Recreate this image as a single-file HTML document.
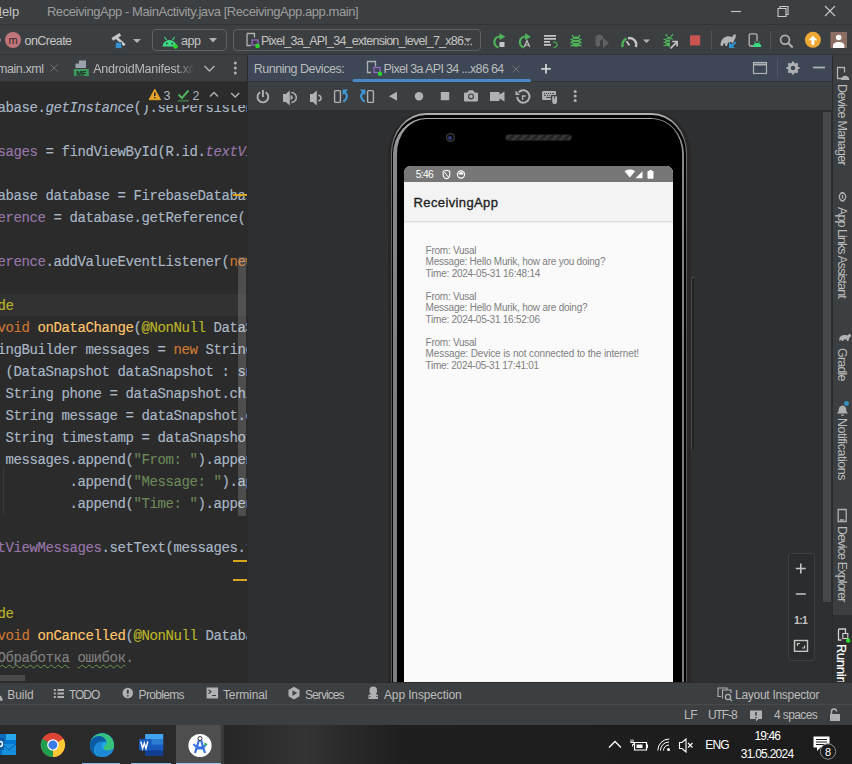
<!DOCTYPE html>
<html><head><meta charset="utf-8">
<style>
*{margin:0;padding:0;box-sizing:border-box}
html,body{width:852px;height:764px;overflow:hidden;background:#3c3f41}
body{position:relative;font-family:"Liberation Sans",sans-serif;color:#bbbbbb}
.a{position:absolute}
.t{position:absolute;white-space:nowrap;font-size:12.5px;line-height:14px}
/* code */
#ed{position:absolute;left:0;top:82px;width:247px;height:601px;background:#2b2b2b;overflow:hidden}
.cl{position:absolute;left:-154.6px;height:22px;line-height:22px;white-space:pre;font-family:"Liberation Mono",monospace;font-size:14px;letter-spacing:-0.4px;color:#a9b7c6;-webkit-text-stroke:0.15px currentColor}
.pu{color:#9876aa}.it{font-style:italic}.kw{color:#cc7832}.an{color:#bbb529}.mt{color:#ffc66d}.st{color:#6a8759}.cm{color:#808080}
.wv{text-decoration:underline wavy #689a50;text-decoration-thickness:1px;text-underline-offset:1.8px;text-decoration-skip-ink:none}
svg{position:absolute;overflow:visible}
.vt{position:absolute;white-space:nowrap;font-size:12.5px;line-height:14px;color:#bbbbbb;transform-origin:0 0;transform:rotate(90deg)}
</style></head><body>

<!-- title bar -->
<div class="a" style="left:0;top:0;width:852px;height:25px;background:#3c3f41"></div>
<div class="a" style="left:0;top:24px;width:852px;height:1px;background:#323537"></div>

<!-- window controls -->
<svg width="852" height="25" style="left:0;top:0">
<path d="M731 11.5h10" stroke="#c8c8c8" stroke-width="1.1"/>
<path d="M778 8.5h8v8h-8z M780 8.5v-2h8v8h-2" stroke="#c8c8c8" stroke-width="1.1" fill="none"/>
<path d="M825 6l10 10M835 6l-10 10" stroke="#c8c8c8" stroke-width="1.1"/>
</svg>

<!-- toolbar -->
<div class="a" style="left:0;top:54px;width:852px;height:1px;background:#323537"></div>
<svg width="852" height="30" style="left:0;top:25px">
<circle cx="-1" cy="15" r="2" fill="#8c8c8c"/>
<circle cx="13" cy="15" r="8" fill="#c0757a"/>
<text x="13" y="19" font-family="Liberation Sans" font-size="11" fill="#3a2526" text-anchor="middle">m</text>
<!-- hammer -->
<path d="M112.3 14.3l8-5" stroke="#c8c8c8" stroke-width="3.2"/>
<path d="M116.5 12.8l8.2 7.5" stroke="#c8c8c8" stroke-width="2.8"/>
<rect x="115.3" y="17.2" width="6.6" height="6.4" fill="#3a3d3f"/>
<rect x="115.8" y="17.7" width="5.6" height="5.4" fill="#3592d0"/>
<path d="M133 14h8l-4 4z" fill="#afb1b3"/>
<!-- app combo -->
<rect x="152.5" y="4.5" width="74" height="21" rx="3.5" fill="none" stroke="#5e6163"/>
<path d="M162.5 21.5a7 6.5 0 0 1 14 0z" fill="#3ddc84"/>
<path d="M164.5 12l2 3M174.5 12l-2 3" stroke="#3ddc84" stroke-width="1.2"/>
<circle cx="166.8" cy="18.5" r="0.9" fill="#3c3f41"/><circle cx="172.2" cy="18.5" r="0.9" fill="#3c3f41"/>
<circle cx="175.5" cy="21.5" r="2.3" fill="#2cd62c"/>
<path d="M209 13h8l-4 4.5z" fill="#afb1b3"/>
<!-- device combo -->
<rect x="233.5" y="4.5" width="247" height="21" rx="3.5" fill="none" stroke="#5e6163"/>
<path d="M247 8.5h7.5v4M251 20.5h-4v-12" fill="none" stroke="#afb1b3" stroke-width="1.3"/>
<rect x="252" y="15" width="6" height="5" fill="none" stroke="#9a6bd0" stroke-width="1.2"/>
<circle cx="257.5" cy="21" r="2.3" fill="#2cd62c"/>
<path d="M464 13.3h7.6l-3.8 3.9z" fill="#a0a2a4"/>
<path d="M464.6 19.5h1.3M467.6 19.5h1.3M470.6 19.5h1.3" stroke="#c4c4c4" stroke-width="1.3"/>
<!-- rerun -->
<path d="M498.5 22.5a5.6 5.6 0 0 1 1.5-11" fill="none" stroke="#4fb15a" stroke-width="2.2"/>
<path d="M499.5 8.3l6 3.4-6 3.4z" fill="#4fb15a"/>
<rect x="499.5" y="17" width="5" height="5" fill="#c4c4c4"/>
<!-- apply changes -->
<path d="M524 22.5a5.6 5.6 0 0 1 1.5-11" fill="none" stroke="#4fb15a" stroke-width="2.2"/>
<path d="M525 8.3l6 3.4-6 3.4z" fill="#4fb15a"/>
<path d="M524.3 22l2.7-6.5 2.7 6.5M525.3 20h3.4" fill="none" stroke="#c4c4c4" stroke-width="1.2"/>
<!-- apply code changes -->
<path d="M544 10.8h12M544 13.9h12M544 16.9h6M544 19.9h7" stroke="#c4c4c4" stroke-width="1.8"/>
<path d="M553 17.5a2.6 2.6 0 1 1 0.5 4.5" fill="none" stroke="#4fb15a" stroke-width="1.2"/>
<!-- debug -->
<ellipse cx="576" cy="16.5" rx="4.2" ry="5.2" fill="#4fb15a"/>
<path d="M572 10l2 2.5M580 10l-2 2.5M570.5 14.5h11M570.5 17.5h11M570.5 20.5h11" stroke="#4fb15a" stroke-width="1.3"/>
<path d="M573 14.5h6M573 17.5h6" stroke="#3c3f41" stroke-width="0.9"/>
<!-- attach debugger -->
<path d="M595.5 11.5l3.5-2 4 1.5v3l-3 2v4.5l-2 1.5-2.5-2z" fill="#5f6163"/>
<path d="M603 13v10l6-5z" fill="#5f6163"/>
<!-- profiler -->
<path d="M622.8 22a6.6 6.6 0 0 1 3.6-8.3" fill="none" stroke="#4fb15a" stroke-width="2.4"/>
<path d="M628 13.3a6.6 6.6 0 0 1 7.8 8.7" fill="none" stroke="#c4c4c4" stroke-width="2.4"/>
<path d="M626.5 16.3l3 4.2" stroke="#c4c4c4" stroke-width="1.8"/>
<path d="M643 14.5h7l-3.5 3.5z" fill="#afb1b3"/>
<!-- bug arrow -->
<ellipse cx="669.3" cy="16.8" rx="4" ry="5" fill="#4fb15a"/>
<path d="M665.5 9.2l2 2.3M673 9.2l-2 2.3M663.5 14.3h3M663.5 17.3h3M663.5 20.3h3" stroke="#4fb15a" stroke-width="1.3"/>
<path d="M666 14.3h6.5M666 17.3h6.5" stroke="#3c3f41" stroke-width="0.8"/>
<path d="M670 21.5h8v-6.5h-8z" fill="#3c3f41"/>
<path d="M670.5 23.5l6.3-6.3M672.3 16.5h4.8v4.8" fill="none" stroke="#c4c4c4" stroke-width="1.7"/>
<!-- stop -->
<rect x="690" y="10.3" width="10.2" height="10.2" fill="#c75450"/>
<path d="M711.5 6v19" stroke="#515456" stroke-width="1"/>
<!-- gradle sync -->
<path d="M720.5 20.5c0-5 2.5-8 6-9 2-0.5 4 0 5.5 0.5 1-1 1.5-2.8 2.8-2.8 1.3 0 1.3 2.5 0.2 4.5-0.8 1.5-1.5 3-2.2 4.5l-2.2-1.5c-0.5 0.5-1.5 0.8-2.6 0.8l-1 3.5h-1.8v-2.5h-1.5l-1 2.5z" fill="#b4b4b4"/>
<path d="M735.7 17.2l-4.8 4.2" stroke="#3592d0" stroke-width="2"/>
<path d="M729 16.7v6.2h5.8z" fill="#3592d0"/>
<!-- device manager -->
<path d="M753 21h-2.5a1.3 1.3 0 0 1-1.3-1.3v-9.5a1.3 1.3 0 0 1 1.3-1.3h5.2a1.3 1.3 0 0 1 1.3 1.3v6" fill="none" stroke="#b4b4b4" stroke-width="1.3"/>
<path d="M753 22a4.1 4.1 0 0 1 8.2 0z" fill="#3ddc84"/>
<path d="M754.5 16.5l1 1.5M759.7 16.5l-1 1.5" stroke="#3ddc84" stroke-width="0.9"/>
<path d="M770.5 6v19" stroke="#515456" stroke-width="1"/>
<!-- search -->
<circle cx="785" cy="14.8" r="4.4" fill="none" stroke="#afb1b3" stroke-width="1.7"/>
<path d="M788.2 18l4.5 4.5" stroke="#afb1b3" stroke-width="1.9"/>
<!-- update -->
<circle cx="812.9" cy="14.8" r="8" fill="#eea935"/>
<path d="M808.6 15.2l4.3-4.5 4.3 4.5h-2.9v4.6h-2.8v-4.6z" fill="#fff"/>
<!-- avatar -->
<rect x="830.5" y="7" width="16.5" height="16" fill="#8d6e63"/>
<circle cx="838.7" cy="12.5" r="2.8" fill="#fff"/>
<path d="M833 23v-2.5c0-2 2.5-3.5 5.7-3.5s5.7 1.5 5.7 3.5v2.5z" fill="#fff"/>
</svg>

<!-- tab row -->
<div class="a" style="left:0;top:55px;width:247px;height:26px;background:#3c3f41"></div>
<div class="a" style="left:0;top:81px;width:833px;height:1px;background:#323232"></div>
<div class="a" style="left:247px;top:55px;width:1px;height:628px;background:#2b2b2b"></div>
<div class="a" style="left:248px;top:55px;width:584px;height:26px;background:#3d4756"></div>
<div class="a" style="left:832px;top:55px;width:1px;height:628px;background:#2b2b2b"></div>
<div class="t" id="manif" style="left:93.2px;top:62.3px;font-size:12.5px;letter-spacing:-0.26px;width:100.5px;overflow:hidden;-webkit-mask-image:linear-gradient(90deg,#000 83%,rgba(0,0,0,0.05))">AndroidManifest.xml</div>
<svg width="852" height="28" style="left:0;top:55px">
<path d="M50.5 9.5l7 7M57.5 9.5l-7 7" stroke="#6e6e6e" stroke-width="1"/>
<path d="M79 5.5h7v7.5h-10.5v-4z" fill="#9aa2ab"/>
<path d="M75.5 8.5h3.5v-3.2z" fill="#3c3f41"/>
<rect x="73.8" y="14" width="15" height="7" fill="#3a9a5b"/>
<text x="81.3" y="20.6" font-family="Liberation Sans" font-weight="bold" font-size="7" fill="#1e2a22" text-anchor="middle">MF</text>
<path d="M204.5 11l5 5 5-5" fill="none" stroke="#afb1b3" stroke-width="1.5"/>
<circle cx="235.3" cy="8" r="1.5" fill="#afb1b3"/><circle cx="235.3" cy="13" r="1.5" fill="#afb1b3"/><circle cx="235.3" cy="18" r="1.5" fill="#afb1b3"/>
<!-- running devices header icons -->
<path d="M371 17.5h-3.5v-11h8v5" fill="none" stroke="#afb1b3" stroke-width="1.3"/>
<rect x="374" y="12.5" width="6" height="5" fill="none" stroke="#9a6bd0" stroke-width="1.2"/>
<circle cx="380" cy="18.8" r="2.2" fill="#2cd62c"/>
<path d="M512.5 10.5l7 7M519.5 10.5l-7 7" stroke="#6e6e6e" stroke-width="1"/>
<rect x="352.5" y="24" width="178.5" height="3" rx="1.5" fill="#4a88c7"/>
<path d="M546 9v9.5M541.2 13.8h9.6" stroke="#d0d0d0" stroke-width="1.8"/>
<rect x="753.5" y="7.5" width="13" height="11" fill="none" stroke="#afb1b3" stroke-width="1.2"/>
<path d="M753.5 9.5h13" stroke="#afb1b3" stroke-width="2"/>
<path d="M777.5 4v18" stroke="#4e5968" stroke-width="1"/>
<circle cx="793" cy="13" r="3.8" fill="none" stroke="#afb1b3" stroke-width="3"/>
<path d="M793 6.5v2.5M793 17v2.5M786.5 13h2.5M797 13h2.5M788.4 8.4l1.8 1.8M795.8 15.8l1.8 1.8M788.4 17.6l1.8-1.8M795.8 10.2l1.8-1.8" stroke="#afb1b3" stroke-width="2.2"/>
<path d="M813 12.5h12" stroke="#afb1b3" stroke-width="1.8"/>
</svg>

<!-- running devices toolbar -->
<div class="a" style="left:248px;top:82px;width:584px;height:28px;background:#3c3f41"></div>
<div class="a" style="left:248px;top:110px;width:584px;height:573px;background:#2e2f31"></div>
<svg width="852" height="28" style="left:0;top:82px">
<g fill="#afb1b3" stroke="#afb1b3">
<path d="M260.2 10.3a5.4 5.4 0 1 0 5.4 0" fill="none" stroke-width="1.9"/>
<path d="M262.9 8v7" stroke-width="1.9"/>
<path d="M283 12h2.8l4-3.6v15.2l-4-3.6h-2.8z" stroke="none"/>
<path d="M291.3 10.5a5 5 0 0 1 0 10" fill="none" stroke-width="1.5"/>
<path d="M290.5 13.2a2.2 2.2 0 0 1 0 4.6z" stroke="none"/>
<path d="M310 12h2.8l4-3.6v15.2l-4-3.6h-2.8z" stroke="none"/>
<path d="M318.3 13.3a2.6 2.6 0 0 1 0 5.4" fill="none" stroke-width="1.6"/>
<rect x="334.6" y="8.6" width="5.8" height="11.8" rx="1" fill="none" stroke-width="1.4"/>
<rect x="367.6" y="8.6" width="5.8" height="11.8" rx="1" fill="none" stroke-width="1.4"/>
<path d="M389 14.3l8-4.5v9z" stroke="none"/>
<circle cx="419" cy="14.2" r="4.2" stroke="none"/>
<rect x="440.8" y="10" width="8.4" height="8.2" stroke="none"/>
<path d="M465.2 10.5h2.2l1.5-2.2h4.2l1.5 2.2h2.2a1.2 1.2 0 0 1 1.2 1.2v6.6a1.2 1.2 0 0 1-1.2 1.2h-11.6a1.2 1.2 0 0 1-1.2-1.2v-6.6a1.2 1.2 0 0 1 1.2-1.2z" stroke="none"/>
<path d="M490 10h9.5v9h-9.5zM499.5 12.5l5-3v10l-5-3z" stroke="none"/>
<path d="M518.7 10.3a6.2 6.2 0 1 1 -1.6 4.6" fill="none" stroke-width="2"/>
<path d="M515.5 8.5v4.5h4.5z" stroke="none"/>
<path d="M522.6 18v-4h3.2" fill="none" stroke-width="1.4"/>
<rect x="542.1" y="8.9" width="13.9" height="9" rx="1" stroke="none"/>
<circle cx="575.2" cy="9.6" r="1.5" stroke="none"/><circle cx="575.2" cy="14.1" r="1.5" stroke="none"/><circle cx="575.2" cy="18.5" r="1.5" stroke="none"/>
</g>
<circle cx="471" cy="14.4" r="3" fill="#3c3f41"/><circle cx="471" cy="14.4" r="1.8" fill="#afb1b3"/>
<g fill="#3c3f41">
<rect x="544" y="11" width="1" height="1"/><rect x="546" y="11" width="1" height="1"/><rect x="547.9" y="11" width="1" height="1"/><rect x="549.9" y="11" width="1" height="1"/><rect x="552.2" y="11" width="1.8" height="1"/>
<rect x="544" y="12.9" width="1.7" height="1"/><rect x="547.1" y="12.9" width="1" height="1"/><rect x="548.9" y="12.9" width="1" height="1"/>
<rect x="546.2" y="14.9" width="4.8" height="1"/>
<rect x="551" y="13" width="7" height="9"/>
</g>
<path d="M552.2 14.2h4.9v5.6a2.45 2.45 0 0 1-4.9 0z" fill="#afb1b3"/>
<path d="M554.65 14.2v2.5" stroke="#3c3f41" stroke-width="0.9"/>
<path d="M344.3 10.2Q350 14.5 343.3 19.8" fill="none" stroke="#3d9ad6" stroke-width="2.1"/>
<path d="M342.6 7.6h5.7l-5.7 5.7z" fill="#3d9ad6"/>
<path d="M363.7 10.2Q358 14.5 364.7 19.8" fill="none" stroke="#3d9ad6" stroke-width="2.1"/>
<path d="M365.4 7.6h-5.7l5.7 5.7z" fill="#3d9ad6"/>
</svg>

<!-- phone -->
<div class="a" style="left:248px;top:110px;width:584px;height:572px;overflow:hidden">
 <div class="a" style="left:443.2px;top:167.3px;width:2.4px;height:173px;background:#232323;border-left:1px solid #4a4a4a;border-top:1px solid #555;border-radius:1px"></div>
  <div class="a" style="left:139.6px;top:2px;width:303.4px;height:700px;border-radius:37px/42px;background:#292727"></div>
 <div class="a" style="left:142.8px;top:3px;width:296.5px;height:700px;border-radius:35.5px/40.5px;background:linear-gradient(180deg,#b0b0b0 0px,#707070 30px,#555 200px)"></div>
 <div class="a" style="left:144px;top:4.6px;width:293.7px;height:700px;border-radius:34px/39px;background:#000"></div>
 <div class="a" style="left:144.7px;top:7.9px;width:291.4px;height:700px;border-radius:33px/36.5px;background:linear-gradient(180deg,#a8aaad 0px,#85878b 40px,#7a7c80 300px)"></div>
 <div class="a" style="left:149px;top:9.4px;width:284.5px;height:700px;border-radius:29px/34.5px;background:#000"></div>
 <!-- camera & speaker -->
 <div class="a" style="left:197.6px;top:22.8px;width:9.4px;height:9.4px;border-radius:50%;background:#0a0a0e;box-shadow:inset 0 0 0 1.2px #3a3a3e"></div>
 <div class="a" style="left:200.3px;top:25.5px;width:4px;height:4px;border-radius:50%;background:#2c3a78"></div>
 <div class="a" style="left:258px;top:24.6px;width:65.2px;height:5.7px;border-radius:3px;background:repeating-linear-gradient(135deg,#1e1e1e 0,#3c3c3c 2.8px,#1e1e1e 5.6px);box-shadow:0 0 0 0.6px #333"></div>
 <!-- screen -->
 <div class="a" style="left:156px;top:56px;width:268.5px;height:520px;border-radius:6.5px 6.5px 0 0;background:#fafafa;overflow:hidden">
  <div class="a" style="left:0;top:0;width:269px;height:16px;background:#777777"></div>
  <div class="a" style="left:0;top:16px;width:269px;height:39px;background:#f3f3f3;box-shadow:0 1px 1.5px rgba(0,0,0,0.16)"></div>
  <svg width="269" height="16" style="left:0;top:0">
   <path d="M39.2 5.2l3.3-1 3.3 1v3.2c0 2.3-1.5 3.8-3.3 4.4-1.8-0.6-3.3-2.1-3.3-4.4z" fill="none" stroke="#fff" stroke-width="1.1"/>
   <path d="M40.5 6l3.8 5" stroke="#fff" stroke-width="1"/>
   <circle cx="57" cy="8.5" r="3.6" fill="none" stroke="#fff" stroke-width="1.1"/>
   <path d="M54.6 7.6a2.6 2.6 0 0 1 4.8 0v1h-4.8z" fill="#fff"/>
   <path d="M220.5 5.2c3-2.4 7.6-2.4 10.6 0l-5.3 6.4z" fill="#fff"/>
   <path d="M231.5 12.2l7-7v7z" fill="#fff"/>
   <rect x="243.5" y="5" width="6" height="7.8" rx="0.8" fill="#fff"/>
   <rect x="245.3" y="4" width="2.4" height="1.2" fill="#fff"/>
  </svg>
 </div>
</div>

<!-- right strip -->
<div class="a" style="left:833px;top:55px;width:19px;height:628px;background:#3c3f41"></div>
<div class="a" style="left:833px;top:614.5px;width:19px;height:68px;background:#2d2f31"></div>
<div class="a" style="left:823px;top:112px;width:8px;height:490px;background:#46484a"></div>
<svg width="19" height="628" style="left:833px;top:55px">
<g fill="none" stroke="#afb1b3" stroke-width="1.3">
<path d="M10 23.5h-5.5v-11h7v5"/>
<path d="M7.5 138a4 4 0 1 1 0 7.6M11.5 138a4 4 0 1 0 0 7.6"/>
<path d="M9.5 140v3.6"/>
<path d="M5.2 466.5v-12h8v12zM7 464.8h4"/>
</g>
<path d="M8 25a4.2 4.2 0 0 1 8.4 0z" fill="#afb1b3"/>
<path d="M6.5 286c-1-3 1-6 5-6 2 0 3 1 3.5 0 1-1.5 3-1 3 0.5s-1.5 2-2 3l-0.5 2.5h-1.5v-1.5h-3l-1 1.5h-1.5v-1.5c-0.5 0-1 1-2 1.5z" fill="#afb1b3"/>
<path d="M5.5 356.5c0-4 1.5-6 4-6s4 2 4 6l1.5 2h-11z M8 359.5a1.5 1.5 0 0 0 3 0" fill="#afb1b3"/>
<circle cx="13.5" cy="348.5" r="2.4" fill="#3592c4"/>
<path d="M5.5 574h7v4M8.5 585h-3v-11" fill="none" stroke="#d0d0d0" stroke-width="1.3"/>
<rect x="9.8" y="578.5" width="5" height="5" fill="none" stroke="#d0d0d0" stroke-width="1.1"/>
<circle cx="15.2" cy="585.5" r="2.2" fill="#2cd62c"/>
</svg>
<div class="a" style="left:833px;top:55px;width:19px;height:627px;overflow:hidden">
<div class="vt" style="left:15.1px;top:589px;letter-spacing:0px;color:#ffffff;-webkit-text-stroke:0.2px #fff">Running Devices</div>
</div>
<!-- zoom controls -->
<div class="a" style="left:787.5px;top:553px;width:27px;height:107.5px;border:1px solid #3e4042;border-radius:3px;background:#2b2c2d"></div>
<svg width="40" height="110" style="left:780px;top:550px">
<path d="M20.8 13.5v10M15.8 18.5h10M15.8 44h10" stroke="#c4c4c4" stroke-width="1.6"/>
<text x="20.6" y="73.5" font-family="Liberation Sans" font-weight="bold" font-size="10.5" fill="#c4c4c4" text-anchor="middle" letter-spacing="-0.6">1:1</text>
<rect x="14.5" y="90.5" width="13" height="10.8" fill="none" stroke="#c4c4c4" stroke-width="1.4"/>
<path d="M17.5 96v-2.5h2.5M24.5 95.5v2.5h-2.5" fill="none" stroke="#c4c4c4" stroke-width="1.2"/>
</svg>

<!-- editor -->
<div id="ed">
<div class="a" style="left:0;top:212px;width:247px;height:22px;background:#323232"></div>
<div class="cl" style="top:15px">        FirebaseDatabase.<span class="it">getInstance</span>().setPersistenceEnabled(true);</div>
<div class="cl" style="top:59px"><span class="pu">        textViewMessages</span> = findViewById(R.id.<span class="pu it">textViewMessages</span>);</div>
<div class="cl" style="top:103px">        FirebaseDatabase database = FirebaseDatabase.<span class="it">getInstance</span>();</div>
<div class="cl" style="top:125px"><span class="pu">        databaseReference</span> = database.getReference(<span class="st">&quot;messages&quot;</span>);</div>
<div class="cl" style="top:169px"><span class="pu">        databaseReference</span>.addValueEventListener(<span class="kw">new</span> ValueEventListener() {</div>
<div class="cl" style="top:213px"><span class="an">            @Override</span></div>
<div class="cl" style="top:235px"><span class="kw">            public</span> <span class="kw">void</span> <span class="mt">onDataChange</span>(<span class="an">@NonNull</span> DataSnapshot snapshot) {</div>
<div class="cl" style="top:257px">                StringBuilder messages = <span class="kw">new</span> StringBuilder();</div>
<div class="cl" style="top:279px">                <span class="kw">for</span> (DataSnapshot dataSnapshot : snapshot.getChildren()) {</div>
<div class="cl" style="top:301px">                    String phone = dataSnapshot.child(<span class="st">&quot;phone&quot;</span>).getValue(String.class);</div>
<div class="cl" style="top:323px">                    String message = dataSnapshot.child(<span class="st">&quot;message&quot;</span>).getValue(String.class);</div>
<div class="cl" style="top:345px">                    String timestamp = dataSnapshot.child(<span class="st">&quot;timestamp&quot;</span>).getValue(String.class);</div>
<div class="cl" style="top:367px">                    messages.append(<span class="st">&quot;From: &quot;</span>).append(phone).append(<span class="st">&quot;\n&quot;</span>)</div>
<div class="cl" style="top:389px">                            .append(<span class="st">&quot;Message: &quot;</span>).append(message).append(<span class="st">&quot;\n&quot;</span>)</div>
<div class="cl" style="top:411px">                            .append(<span class="st">&quot;Time: &quot;</span>).append(timestamp).append(<span class="st">&quot;\n\n&quot;</span>);</div>
<div class="cl" style="top:433px">                }</div>
<div class="cl" style="top:455px"><span class="pu">                textViewMessages</span>.setText(messages.toString());</div>
<div class="cl" style="top:477px">            }</div>
<div class="cl" style="top:521px"><span class="an">            @Override</span></div>
<div class="cl" style="top:543px"><span class="kw">            public</span> <span class="kw">void</span> <span class="mt">onCancelled</span>(<span class="an">@NonNull</span> DatabaseError error) {</div>
<div class="cl" style="top:565px">                <span class="cm">// </span><span class="cm wv">Обработка</span><span class="cm"> </span><span class="cm wv">ошибок</span><span class="cm">.</span></div>

<div class="a" style="left:144px;top:2px;width:103px;height:21px;background:#2b2b2b"></div>
<div class="a" style="left:238px;top:175px;width:8px;height:259px;background:rgba(255,255,255,0.16)"></div>
<div class="a" style="left:0;top:593px;width:24.5px;height:5.7px;background:#4a4a4a"></div>
<div class="a" style="left:233px;top:112px;width:14px;height:2px;background:#d9a51c"></div>
<div class="a" style="left:233px;top:478px;width:14px;height:2px;background:#d9a51c"></div>
<div class="a" style="left:233px;top:497px;width:14px;height:2px;background:#d9a51c"></div>
<div class="a" style="left:3px;top:385px;width:1px;height:48px;background:#393939"></div>
<svg width="247" height="30" style="left:0;top:0">
<path d="M154.8 7.2l5.8 10.5h-11.6z" fill="#e5a42c" stroke="#e5a42c" stroke-width="1" stroke-linejoin="round"/>
<path d="M154.8 10.5v3.6M154.8 15v1.3" stroke="#2b2b2b" stroke-width="1.5"/>
<text x="163.5" y="17.5" font-family="Liberation Sans" font-size="12.5" fill="#a9b7c6">3</text>
<path d="M178.5 12.5l3.5 3.5 6.5-7.5" fill="none" stroke="#4fb15a" stroke-width="2"/>
<path d="M178 19.5l1.5-1.3 1.5 1.3 1.5-1.3 1.5 1.3 1.5-1.3 1.5 1.3 1.5-1.3" fill="none" stroke="#4fb15a" stroke-width="1"/>
<text x="192.5" y="17.5" font-family="Liberation Sans" font-size="12.5" fill="#a9b7c6">2</text>
<path d="M210 14.5l4-4 4 4" fill="none" stroke="#afb1b3" stroke-width="1.4"/>
<path d="M231.2 11l4 4 4-4" fill="none" stroke="#afb1b3" stroke-width="1.4"/>
</svg>
</div>

<!-- bottom bars -->
<div class="a" style="left:0;top:682px;width:852px;height:1px;background:#2b2b2b"></div>
<div class="a" style="left:0;top:683px;width:852px;height:21px;background:#3c3f41"></div>
<div class="a" style="left:0;top:704px;width:852px;height:1px;background:#4a4947"></div>
<div class="a" style="left:0;top:705px;width:852px;height:20px;background:#3c3f41"></div>

<svg width="852" height="42" style="left:0;top:683px">
<g fill="#afb1b3">
<path d="M-2 11.5l3 1.5 2 4-2 1-3-2z"/>
<rect x="53.8" y="6" width="2" height="2"/><rect x="53.8" y="9.5" width="2" height="2"/><rect x="53.8" y="13" width="2" height="2"/>
<rect x="57.5" y="6" width="6.5" height="2"/><rect x="57.5" y="9.5" width="6.5" height="2"/><rect x="57.5" y="13" width="6.5" height="2"/>
<circle cx="127.8" cy="10" r="5.3"/>
<path d="M206.6 4.5h11.5v11h-11.5z"/>
<path d="M294 3.8l5.5 3.2v6.3l-5.5 3.2-5.5-3.2v-6.3z"/>
<path d="M368.5 16v-3.5c0-1 1-1.5 2-2l-1-1v-2.5c0-2 1.5-3.5 3.5-3.5h0.5c2 0 3.5 1.5 3.5 3.5v2.5l-1 1c1 0.5 2 1 2 2v3.5z"/>
</g>
<path d="M127.8 6.8v4M127.8 12.3v1.2" stroke="#3c3f41" stroke-width="1.8"/>
<path d="M208.5 6.8l2.5 2-2.5 2M212 12.5h4" fill="none" stroke="#3c3f41" stroke-width="1.1"/>
<path d="M292.5 7.2v5.8l4.6-2.9z" fill="#3c3f41"/>
<path d="M369 11h1.5M376 11h1.5M369 13.5h1.5M376 13.5h1.5" stroke="#3c3f41" stroke-width="0.8"/>
<!-- layout inspector -->
<path d="M721 13.5h-3v-8.5h9v2" fill="none" stroke="#afb1b3" stroke-width="1.1"/>
<path d="M722.5 15.5v-8.5h8.5v3" fill="none" stroke="#afb1b3" stroke-width="1.1"/>
<circle cx="728" cy="14" r="2.6" fill="none" stroke="#afb1b3" stroke-width="1.2"/>
<path d="M730 16l2 2" stroke="#afb1b3" stroke-width="1.3"/>
<!-- status icons -->
<path d="M750 27.5h12v8.5h-3.5l-2.5 2.5v-2.5h-6z" fill="#afb1b3"/>
<path d="M756 29v3.8M756 34v1.2" stroke="#3c3f41" stroke-width="1.5"/>
<rect x="830" y="31" width="10" height="7" fill="#afb1b3"/>
<path d="M831.5 31v-2.5a2.5 2.5 0 0 1 5 0" fill="none" stroke="#afb1b3" stroke-width="1.5"/>
</svg>

<!-- taskbar -->
<div class="a" style="left:0;top:725px;width:852px;height:39px;background:linear-gradient(90deg,#2a2a2a 0px,#2a2a2a 176px,#262626 226px,#2d2d2d 265px,#343434 305px,#2a2a2a 345px,#1f1f1f 400px,#1c1c1c 852px)"></div>
<div class="a" style="left:176px;top:725px;width:44.5px;height:39px;background:#4e4e4e"></div>
<div class="a" style="left:220.5px;top:725px;width:3.5px;height:39px;background:#3a3a3a"></div>
<div class="a" style="left:81.7px;top:762.5px;width:38.5px;height:1.5px;background:#86b3de"></div>
<div class="a" style="left:131px;top:762.5px;width:40px;height:1.5px;background:#86b3de"></div>
<div class="a" style="left:176px;top:762.5px;width:44.5px;height:1.5px;background:#9ac3ea"></div>
<svg width="852" height="39" style="left:0;top:725px">
<!-- outlook -->
<rect x="-4" y="9" width="20" height="21" fill="#0f6cbd"/>
<rect x="6" y="9" width="10" height="6" fill="#28a8ea"/>
<rect x="6" y="15" width="10" height="5" fill="#0078d4"/>
<path d="M2 19h14v11h-14z" fill="#1490df"/>
<path d="M2 19l7 6 7-6" fill="none" stroke="#0a5aa8" stroke-width="1"/>
<rect x="-4" y="13" width="8" height="12" fill="#0a5aa8"/>
<circle cx="0" cy="19" r="2.5" fill="none" stroke="#fff" stroke-width="1.4"/>
<!-- chrome -->
<circle cx="52.9" cy="19.9" r="12.1" fill="#db4437"/>
<path d="M52.9 19.9L63.38 13.85A12.1 12.1 0 0 1 52.9 32z" fill="#fcc934"/>
<path d="M52.9 19.9L52.9 32A12.1 12.1 0 0 1 42.42 13.85z" fill="#1e9e4f"/>
<circle cx="52.9" cy="19.9" r="5.7" fill="#fff"/>
<circle cx="52.9" cy="19.9" r="4.5" fill="#3b7be8"/>
<!-- edge -->
<circle cx="102" cy="19.9" r="12" fill="#1fa9e0"/>
<path d="M90 19.5a12 12 0 0 1 24 2c0 3-3 4.5-6 4.5-3.5 0-4-2-4-3 0-3 3-3 3-5.5 0-3-4-6-8-6-5 0-9 4-9 8z" fill="#36c27a"/>
<path d="M90 19.9c0-5 4-9 9-9 3.5 0 7 2.5 7 6-1 0-2-0.2-3-0.2-5 0-9 3.5-9 8 0 3 1.5 5.5 4 7.2-4.8-1.5-8-6-8-12z" fill="#0c59a4"/>
<path d="M94.5 23c0-3.5 3-6.5 7.5-6.5 0.8 0 1.5 0.1 2.2 0.3-1.5 0.8-2.6 2.2-2.6 4.2 0 2.3 2 4.5 6 4.5 2.5 0 4.5-1 6.2-2.5-1 5.3-5.7 9-11.3 9-4.5 0-8-3.8-8-9z" fill="#1e88d6"/>
<!-- word -->
<rect x="145.2" y="9" width="18" height="21.5" rx="1" fill="#185abd"/>
<rect x="145.2" y="9" width="18" height="5.4" fill="#41a5ee"/>
<rect x="145.2" y="14.4" width="18" height="5.4" fill="#2b7cd3"/>
<rect x="145.2" y="19.8" width="18" height="5.4" fill="#185abd"/>
<rect x="145.2" y="25.2" width="18" height="5.3" fill="#103f91"/>
<rect x="139" y="14" width="12.6" height="11.5" rx="1" fill="#185abd"/>
<path d="M140.8 16.5l1.8 7 1.7-5.5 1.7 5.5 1.8-7" fill="none" stroke="#fff" stroke-width="1.4"/>
<!-- android studio -->
<circle cx="200" cy="20.5" r="11.6" fill="#fff"/>
<path d="M195 28l4.2-13.5M205 28l-4.2-13.5M195.5 23.5h9" stroke="#3870e0" stroke-width="2.2"/>
<path d="M193.5 19c2 3 4 3.5 6.5 3.5s4.5-0.5 6.5-3.5" fill="none" stroke="#3870e0" stroke-width="2"/>
<circle cx="200" cy="13.5" r="2" fill="#fff" stroke="#333" stroke-width="1"/>
<path d="M204.5 17l3 2.5-3 1.5z" fill="#2bb24c"/>
<!-- tray -->
<path d="M609 22.5l6-6 6 6" fill="none" stroke="#fff" stroke-width="1.3"/>
<path d="M634.5 17.5h12v7.5h-12z" fill="none" stroke="#fff" stroke-width="1.2"/>
<rect x="646.5" y="19.5" width="1.5" height="3.5" fill="#fff"/>
<rect x="636.5" y="19.5" width="6" height="3.5" fill="#fff"/>
<path d="M631 14.5v3M633 14.5v3M630.5 17.5h3.5v2h-1.5v2" fill="none" stroke="#fff" stroke-width="1"/>
<path d="M657.8 25.5a11.5 11.5 0 0 1 11.5-11.5M660.5 25.5a8.5 8.5 0 0 1 8.5-8.5M663.5 25.5a5.5 5.5 0 0 1 5.5-5.5" fill="none" stroke="#fff" stroke-width="1"/>
<circle cx="668.5" cy="24.5" r="1.5" fill="#fff"/>
<path d="M679.5 17.5h2.5l4-3.5v13l-4-3.5h-2.5z" fill="none" stroke="#fff" stroke-width="1.1"/>
<path d="M688 18l4.5 4.5M692.5 18l-4.5 4.5" stroke="#fff" stroke-width="1.1"/>
<!-- notification -->
<path d="M813.5 11.5h16v11h-9l-3.5 3.5v-3.5h-3.5z" fill="#fff"/>
<path d="M816 14.5h11M816 17h11M816 19.5h8" stroke="#1c1c1c" stroke-width="1"/>
<circle cx="828" cy="26.5" r="7.7" fill="#1c1c1c" stroke="#8a8a8a" stroke-width="1"/>
<text x="828" y="30.5" font-family="Liberation Sans" font-size="11" fill="#fff" text-anchor="middle">8</text>
</svg>

<div class="a" style="left:0;top:17px;width:3px;height:1px;background:#c4c4c4"></div>
<!-- TEXTS -->
<div class="t" style="left:-7.5px;top:4.6px;font-size:13px;letter-spacing:0.000px;color:#c4c4c4">Help</div>
<div class="t" style="left:46.9px;top:4.6px;font-size:13px;letter-spacing:-0.437px;color:#9d9d9d">ReceivingApp - MainActivity.java [ReceivingApp.app.main]</div>
<div class="t" style="left:24.6px;top:33.8px;font-size:12.5px;letter-spacing:-0.567px;color:#c4c4c4">onCreate</div>
<div class="t" style="left:181.0px;top:33.8px;font-size:12.5px;letter-spacing:-0.452px;color:#c4c4c4">app</div>
<div class="t" style="left:261.0px;top:33.8px;font-size:12.5px;letter-spacing:-0.752px;color:#c4c4c4">Pixel_3a_API_34_extension_level_7_x86</div>
<div class="t" style="left:-3.1px;top:62.3px;font-size:12.5px;letter-spacing:-0.400px;color:#bbbbbb">main.xml</div>
<div class="t" style="left:253.7px;top:62.1px;font-size:12.5px;letter-spacing:-0.466px;color:#bbbbbb">Running Devices:</div>
<div class="t" style="left:383.6px;top:62.1px;font-size:12.5px;letter-spacing:-0.647px;color:#bbbbbb">Pixel 3a API 34 ...x86 64</div>
<div class="t" style="left:7.2px;top:688.0px;font-size:12px;letter-spacing:-0.052px;color:#bbbbbb">Build</div>
<div class="t" style="left:69.0px;top:688.0px;font-size:12px;letter-spacing:-1.038px;color:#bbbbbb">TODO</div>
<div class="t" style="left:138.6px;top:688.0px;font-size:12px;letter-spacing:-0.669px;color:#bbbbbb">Problems</div>
<div class="t" style="left:223.0px;top:688.0px;font-size:12px;letter-spacing:-0.140px;color:#bbbbbb">Terminal</div>
<div class="t" style="left:305.0px;top:688.0px;font-size:12px;letter-spacing:-0.916px;color:#bbbbbb">Services</div>
<div class="t" style="left:384.0px;top:688.0px;font-size:12px;letter-spacing:-0.132px;color:#bbbbbb">App Inspection</div>
<div class="t" style="left:735.0px;top:688.2px;font-size:12px;letter-spacing:-0.282px;color:#bbbbbb">Layout Inspector</div>
<div class="t" style="left:684.0px;top:707.5px;font-size:12px;letter-spacing:-0.300px;color:#bbbbbb">LF</div>
<div class="t" style="left:708.0px;top:707.5px;font-size:12px;letter-spacing:-1.081px;color:#bbbbbb">UTF-8</div>
<div class="t" style="left:774.0px;top:707.5px;font-size:12px;letter-spacing:-0.604px;color:#bbbbbb">4 spaces</div>
<div class="t" style="left:705.3px;top:738.2px;font-size:12px;letter-spacing:-0.900px;color:#ffffff">ENG</div>
<div class="t" style="left:754.5px;top:729.0px;font-size:12px;letter-spacing:-0.889px;color:#ffffff">19:46</div>
<div class="t" style="left:740.7px;top:747.4px;font-size:12px;letter-spacing:-0.732px;color:#ffffff">31.05.2024</div>
<div class="t" style="left:415.7px;top:167.5px;font-size:10.3px;letter-spacing:-0.671px;color:#ffffff">5:46</div>
<div class="t" style="left:413.6px;top:195.5px;font-size:13px;letter-spacing:0.374px;color:#1f1f1f;-webkit-text-stroke:0.35px #1f1f1f">ReceivingApp</div>
<div class="t" style="left:425.6px;top:244.1px;font-size:10px;letter-spacing:-0.261px;color:#808080">From: Vusal</div>
<div class="t" style="left:425.6px;top:255.4px;font-size:10px;letter-spacing:-0.234px;color:#808080">Message: Hello Murik, how are you doing?</div>
<div class="t" style="left:425.6px;top:266.8px;font-size:10px;letter-spacing:-0.229px;color:#808080">Time: 2024-05-31 16:48:14</div>
<div class="t" style="left:425.6px;top:290.1px;font-size:10px;letter-spacing:-0.261px;color:#808080">From: Vusal</div>
<div class="t" style="left:425.6px;top:301.3px;font-size:10px;letter-spacing:-0.232px;color:#808080">Message: Hello Murik, how are doing?</div>
<div class="t" style="left:425.6px;top:312.7px;font-size:10px;letter-spacing:-0.246px;color:#808080">Time: 2024-05-31 16:52:06</div>
<div class="t" style="left:425.6px;top:336.1px;font-size:10px;letter-spacing:-0.261px;color:#808080">From: Vusal</div>
<div class="t" style="left:425.6px;top:347.3px;font-size:10px;letter-spacing:-0.115px;color:#808080">Message: Device is not connected to the internet!</div>
<div class="t" style="left:425.6px;top:358.7px;font-size:10px;letter-spacing:-0.279px;color:#808080">Time: 2024-05-31 17:41:01</div>
<div class="vt" style="left:848.9px;top:83.6px;letter-spacing:-0.727px;color:#bbbbbb">Device Manager</div>
<div class="vt" style="left:848.9px;top:207.0px;letter-spacing:-0.928px;color:#bbbbbb">App Links Assistant</div>
<div class="vt" style="left:848.9px;top:347.9px;letter-spacing:-0.813px;color:#bbbbbb">Gradle</div>
<div class="vt" style="left:848.9px;top:418.0px;letter-spacing:-0.470px;color:#bbbbbb">Notifications</div>
<div class="vt" style="left:848.9px;top:525.7px;letter-spacing:-0.840px;color:#bbbbbb">Device Explorer</div>
<!-- /TEXTS -->
</body></html>
